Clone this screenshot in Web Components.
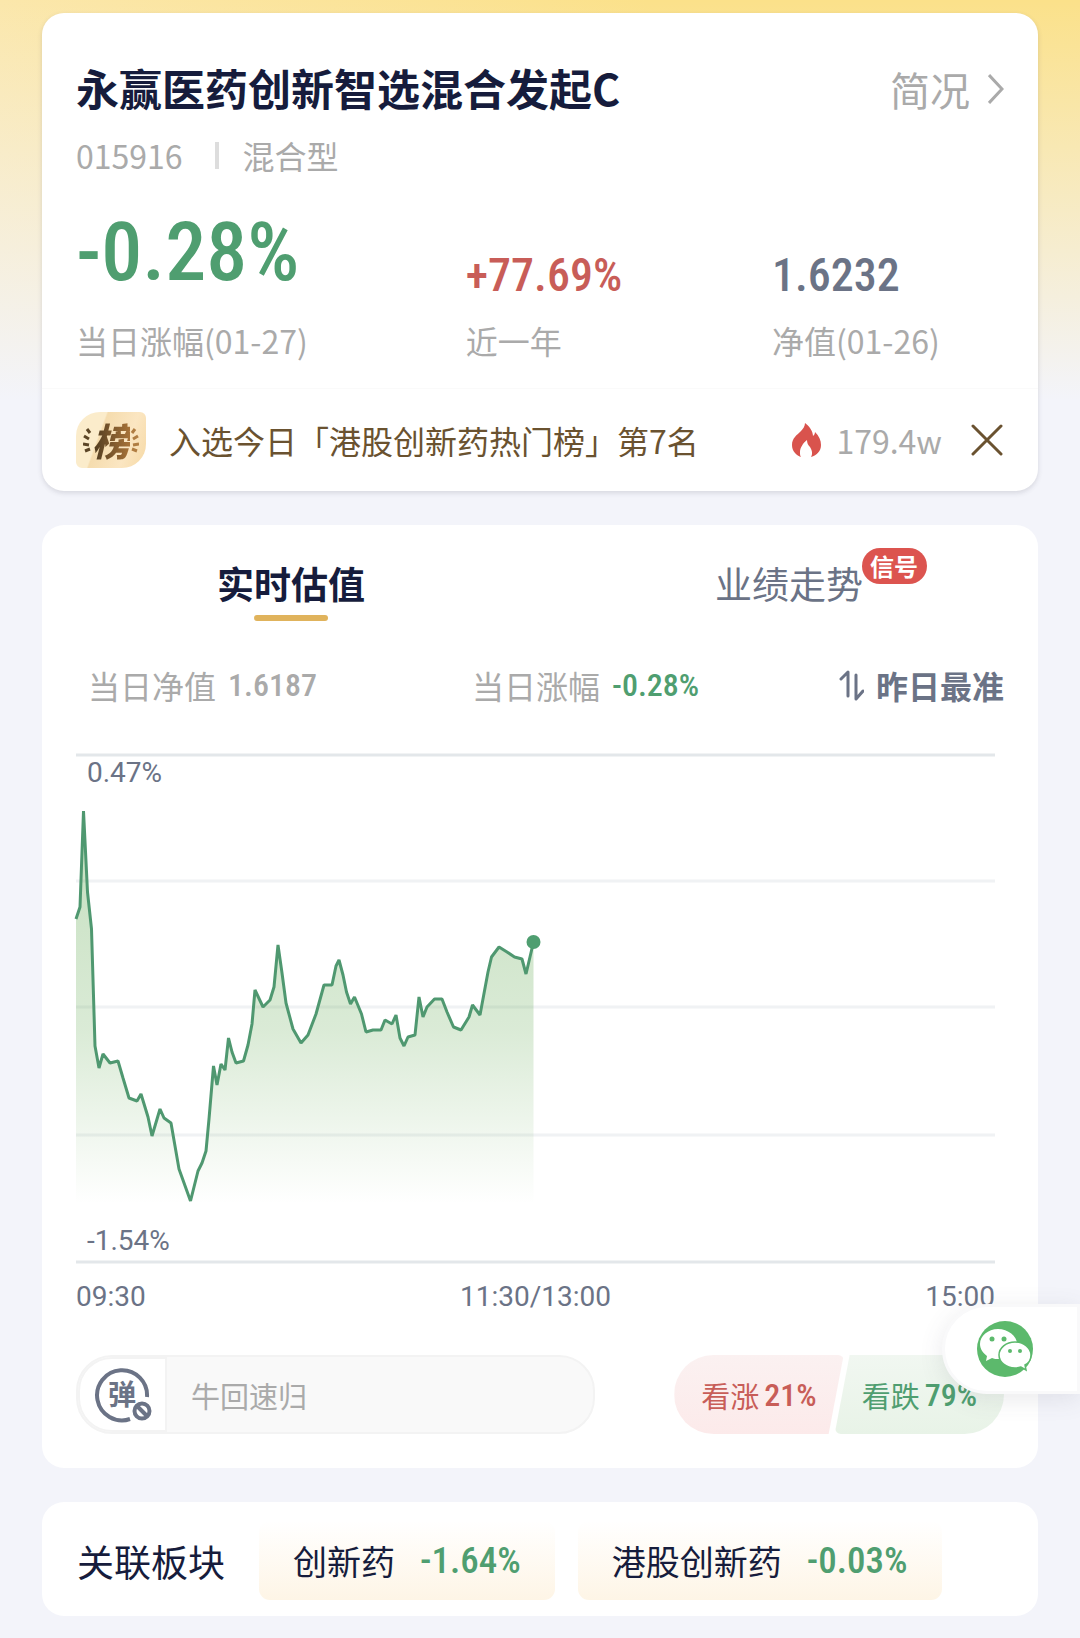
<!DOCTYPE html>
<html lang="zh-CN">
<head>
<meta charset="UTF-8">
<meta name="viewport" content="width=device-width, initial-scale=1.0">
<title>永赢医药创新智选混合发起C</title>
<style>
    :root {
        --ink: #161c3c;
        --slate: #6b7386;
        --muted: #aaaaaa;
        --green: #4f9e70;
        --red: #c85d58;
        --brown: #6a5230;
        --number-font: "Roboto Condensed", "Liberation Sans Narrow", Roboto, sans-serif;
    }
    * { box-sizing: border-box; }
    html { background: #f3f4fa; }
    body {
        margin: 0;
        padding: 13px 42px 21px;
        display: flex;
        flex-direction: column;
        gap: 34px;
        font-family: "Noto Sans CJK SC", sans-serif;
        font-size: 32px;
        line-height: 40px;
        color: var(--ink);
        background:
            linear-gradient(to bottom, rgba(243, 244, 250, 0) 0, #f3f4fa 400px),
            linear-gradient(to right, #fbe7ab, #fbe18a 60%);
    }
</style>
</head>
<body>
    <fund-header code="015916" type="混合型">
        永赢医药创新智选混合发起C
        <fund-metric slot="metrics" tone="green" size="big" value="-0.28%">当日涨幅(01-27)</fund-metric>
        <fund-metric slot="metrics" tone="red" value="+77.69%">近一年</fund-metric>
        <fund-metric slot="metrics" tone="slate" value="1.6232">净值(01-26)</fund-metric>
        <rank-strip slot="strip" heat="179.4w">入选今日「港股创新药热门榜」第7名</rank-strip>
    </fund-header>

    <estimate-panel>
        <intraday-chart high="0.47%" low="-1.54%"></intraday-chart>
        <barrage-box slot="footer" placeholder="牛回速归"></barrage-box>
        <vote-bar slot="footer" up="21%" down="79%"></vote-bar>
    </estimate-panel>

    <related-sectors>
        <sector-chip change="-1.64%">创新药</sector-chip>
        <sector-chip change="-0.03%">港股创新药</sector-chip>
    </related-sectors>

    <wechat-float></wechat-float>

<script>
const baseStyles = `
    * { box-sizing: border-box; }
    button, input {
        font: inherit;
        color: inherit;
        margin: 0;
        padding: 0;
        border: 0;
        background: none;
    }
    button { cursor: pointer; }
    a { color: inherit; text-decoration: none; }
    svg { display: block; flex: none; }
    .num { font-family: var(--number-font); font-weight: 500; }
`;

class BaseElement extends HTMLElement {
    constructor() {
        super();
        this.attachShadow({ mode: 'open' });
    }

    connectedCallback() {
        this.shadowRoot.innerHTML = `<style>${baseStyles}</style>${this.render()}`;
    }
}

// 基金头部
class FundHeader extends BaseElement {
    render() {
        return `
            <style>
                :host {
                    display: block;
                    background: white;
                    border-radius: 22px;
                    box-shadow: 0 2px 5px rgba(60, 60, 80, 0.16);
                }
                .main { padding: 44px 34px 28px; }
                .top {
                    display: flex;
                    justify-content: space-between;
                    align-items: baseline;
                }
                h1 {
                    margin: 0;
                    font-size: 43px;
                    line-height: 60px;
                    font-weight: 700;
                }
                .more {
                    display: flex;
                    align-items: center;
                    gap: 18px;
                    font-size: 40px;
                    color: var(--muted);
                }
                .sub {
                    display: flex;
                    align-items: center;
                    gap: 24px;
                    margin-top: 18px;
                    color: var(--muted);
                }
                .sub i {
                    width: 4px;
                    height: 27px;
                    margin-left: 8px;
                    background: #dddddd;
                }
                .metrics {
                    display: grid;
                    grid-template-columns: 42fr 33fr 25fr;
                    align-items: end;
                    margin-top: 32px;
                }
            </style>
            <div class="main">
                <div class="top">
                    <h1><slot></slot></h1>
                    <a class="more" href="#profile">简况
                        <svg width="16" height="30" viewBox="0 0 16 30" fill="none" stroke="#aaaaaa" stroke-width="3" aria-hidden="true">
                            <path d="M1 1 14 15 1 29"/>
                        </svg>
                    </a>
                </div>
                <div class="sub"><span>${this.getAttribute('code')}</span><i></i><span>${this.getAttribute('type')}</span></div>
                <div class="metrics"><slot name="metrics"></slot></div>
            </div>
            <slot name="strip"></slot>
        `;
    }
}

class FundMetric extends BaseElement {
    render() {
        const big = this.getAttribute('size') === 'big';
        return `
            <style>
                :host { display: block; }
                .num {
                    font-size: ${big ? 82 : 46}px;
                    line-height: ${big ? 90 : 56}px;
                    margin-bottom: ${big ? 23 : 17}px;
                    color: var(--${this.getAttribute('tone')});
                }
                .label { color: var(--muted); }
            </style>
            <div class="num">${this.getAttribute('value')}</div>
            <div class="label"><slot></slot></div>
        `;
    }
}

// 上榜提示条
class RankStrip extends BaseElement {
    render() {
        return `
            <style>
                :host {
                    display: flex;
                    align-items: center;
                    padding: 23px 35px 23px 34px;
                    border-top: 1px solid #fafafa;
                    color: var(--brown);
                }
                .badge {
                    display: flex;
                    align-items: center;
                    justify-content: center;
                    width: 70px;
                    height: 56px;
                    margin-right: 23px;
                    border-radius: 24px 6px 24px 6px;
                    background: linear-gradient(110deg, #fbeccb 34%, #f5dcae 36%, #fbe6c2 70%, #f6d9a5);
                }
                .badge b {
                    font-size: 38px;
                    line-height: 40px;
                    font-weight: 900;
                    font-style: italic;
                    color: transparent;
                    background: linear-gradient(to right, #4d3a20, #a87338);
                    -webkit-background-clip: text;
                    background-clip: text;
                }
                p { margin: 0; flex: 1; }
                .heat {
                    display: flex;
                    align-items: center;
                    gap: 14px;
                    margin-right: 29px;
                    color: var(--muted);
                }
            </style>
            <span class="badge">
                <svg width="9" height="26" viewBox="0 0 9 26" stroke="#5b4526" stroke-width="3" aria-hidden="true"><path d="M4 2l3 4M1 9l5 3M0 17l6 1M2 24l5-2"/></svg>
                <b>榜</b>
                <svg width="9" height="26" viewBox="0 0 9 26" stroke="#b07d42" stroke-width="3" aria-hidden="true"><path d="M5 2L2 6M8 9l-5 3M9 17l-6 1M7 24l-5-2"/></svg>
            </span>
            <p><slot></slot></p>
            <span class="heat">
                <svg width="30" height="34" viewBox="0 0 30 34" aria-hidden="true">
                    <path fill="#d9534d" d="M13 0c4 3 8 8 8 13 1-1 2-2 2-4 4 4 6 8 6 13 0 6-4 10-10 12 2-3 1-7-1-10-2-2-3-4-3-7-4 3-7 8-7 12 0 2 0 4 1 5C4 32 0 28 0 22c0-7 5-10 9-14 2-2 4-5 4-8z"/>
                </svg>
                ${this.getAttribute('heat')}
            </span>
            <button type="button" aria-label="关闭">
                <svg width="32" height="32" viewBox="0 0 32 32" stroke="#6a5230" stroke-width="3" stroke-linecap="round" aria-hidden="true"><path d="M2 2l28 28M30 2L2 30"/></svg>
            </button>
        `;
    }
}

// 实时估值面板
class EstimatePanel extends BaseElement {
    render() {
        return `
            <style>
                :host {
                    display: block;
                    padding: 23px 34px 34px;
                    background: white;
                    border-radius: 22px;
                }
                .tabs {
                    display: grid;
                    grid-template-columns: 1fr 1fr;
                    margin: 0 -34px;
                }
                .tabs button {
                    position: relative;
                    justify-self: center;
                    padding: 10px 0 13px;
                    font-size: 37px;
                    line-height: 50px;
                    color: var(--slate);
                }
                .tabs .active {
                    font-weight: 700;
                    color: var(--ink);
                }
                .tabs .active::after {
                    content: '';
                    position: absolute;
                    left: 25%;
                    right: 25%;
                    bottom: 0;
                    height: 6px;
                    border-radius: 3px;
                    background: #e0b35c;
                }
                .signal {
                    position: absolute;
                    left: 99%;
                    top: 0;
                    width: 65px;
                    border-radius: 18px;
                    font-size: 24px;
                    line-height: 36px;
                    font-weight: 700;
                    color: white;
                    background: #dc544f;
                }
                .stats {
                    display: grid;
                    grid-template-columns: 383fr 366fr auto;
                    align-items: center;
                    padding-left: 12px;
                    margin: 44px 0 49px;
                    color: var(--muted);
                }
                .stats span, .stats button {
                    display: flex;
                    align-items: center;
                    gap: 12px;
                }
                .stats .num { font-size: 32px; }
                .stats .down { color: var(--green); }
                .stats button {
                    font-weight: 700;
                    color: var(--slate);
                }
                .footer {
                    display: flex;
                    gap: 79px;
                    margin-top: 41px;
                }
            </style>
            <div class="tabs" role="tablist">
                <button class="active" type="button" role="tab" aria-selected="true">实时估值</button>
                <button type="button" role="tab" aria-selected="false">业绩走势<span class="signal">信号</span></button>
            </div>
            <div class="stats">
                <span>当日净值 <b class="num">1.6187</b></span>
                <span>当日涨幅 <b class="num down">-0.28%</b></span>
                <button type="button">
                    <svg width="25" height="32" viewBox="0 0 25 32" fill="none" stroke="#6b7386" stroke-width="3" stroke-linejoin="round" stroke-linecap="round" aria-hidden="true"><path d="M2 10l7-7v24M17 6v24l7-8"/></svg>
                    昨日最准
                </button>
            </div>
            <slot></slot>
            <div class="footer"><slot name="footer"></slot></div>
        `;
    }
}

// 分时走势, 坐标为绘图区内的点
const points = [
    [0, 165], [4, 153], [7.5, 57], [11.5, 138], [15.5, 175], [19, 292], [23, 314], [27, 300], [34, 309],
    [42, 307], [47, 324], [53, 344], [61, 347], [65, 340], [72, 363], [76, 382], [84, 355], [88, 364],
    [95, 369], [103, 415], [114.5, 447], [122, 417], [126, 409], [130, 397], [133, 365], [137.5, 312],
    [141, 331], [145, 310], [149, 316], [152.5, 284], [156, 298], [160, 309], [167.5, 307], [172, 291],
    [176, 270], [179, 236], [187, 253], [194, 246], [198, 233], [202, 191], [206, 219], [210, 249],
    [217, 275], [225, 289], [232, 281], [240, 260], [248, 231], [256, 231], [260, 212], [263, 206],
    [267, 221], [270.5, 238], [274.5, 250], [278.5, 243], [285.5, 260], [290, 278], [297, 276], [305, 276],
    [309, 266], [316, 270], [320, 261], [324, 284], [328, 292], [332, 283], [339, 281], [343, 243],
    [347, 263], [351, 253], [358.5, 245], [366, 245], [371, 258], [377.5, 273], [385, 276], [393, 263],
    [396.5, 251], [404, 261], [412, 218], [415.5, 203], [423, 193], [431, 198], [438.5, 203], [446, 205],
    [450, 220], [457.5, 188]
];

class IntradayChart extends BaseElement {
    render() {
        const line = points.map(p => p.join(' ')).join('L');
        const [lastX, lastY] = points[points.length - 1];
        const grid = [127, 253, 381].map(y => `<path stroke="#f0f2f4" d="M0 ${y}H919"/>`).join('');
        return `
            <style>
                :host {
                    display: block;
                    padding-right: 9px;
                    font-family: Roboto, sans-serif;
                    font-size: 28px;
                    line-height: 34px;
                    color: var(--slate);
                }
                .plot { display: grid; }
                .plot > * { grid-area: 1 / 1; }
                svg { width: 100%; height: auto; overflow: visible; }
                .labels {
                    display: flex;
                    flex-direction: column;
                    justify-content: space-between;
                    padding: 2px 11px 6px;
                }
                .times {
                    display: flex;
                    justify-content: space-between;
                    padding-top: 16px;
                }
            </style>
            <div class="plot">
                <svg viewBox="0 0 919 510" fill="none" stroke-width="3" role="img" aria-label="当日估值走势">
                    <defs>
                        <linearGradient id="fade" gradientUnits="userSpaceOnUse" x1="0" y1="100" x2="0" y2="450">
                            <stop offset="0" stop-color="#4f9e3c" stop-opacity="0.31"/>
                            <stop offset="0.5" stop-color="#4f9e3c" stop-opacity="0.21"/>
                            <stop offset="1" stop-color="#4f9e3c" stop-opacity="0"/>
                        </linearGradient>
                    </defs>
                    ${grid}
                    <path stroke="#e3e7ea" d="M0 1H919M0 508H919"/>
                    <path fill="url(#fade)" d="M${line}V450H0z"/>
                    <path stroke="#4f9870" stroke-linejoin="bevel" d="M${line}"/>
                    <circle cx="${lastX}" cy="${lastY}" r="7" fill="#4f9e70"/>
                </svg>
                <div class="labels">
                    <span>${this.getAttribute('high')}</span>
                    <span>${this.getAttribute('low')}</span>
                </div>
            </div>
            <div class="times"><span>09:30</span><span>11:30/13:00</span><span>15:00</span></div>
        `;
    }
}

// 弹幕输入框
class BarrageBox extends BaseElement {
    render() {
        return `
            <style>
                :host {
                    flex: 1;
                    min-width: 0;
                    display: flex;
                    height: 79px;
                    border: 2px solid #f3f3f3;
                    border-radius: 36px;
                    background: #f9f9f9;
                    overflow: hidden;
                }
                button {
                    flex: none;
                    padding: 8px 12px 8px 15px;
                    border: 2px solid #f3f3f3;
                    border-radius: 34px 0 0 34px;
                    background: white;
                }
                input {
                    flex: 1;
                    min-width: 0;
                    padding: 0 24px;
                    font-size: 29px;
                    outline: none;
                }
                input::placeholder { color: var(--muted); opacity: 1; }
            </style>
            <button type="button" aria-label="弹幕开关">
                <svg width="58" height="56" viewBox="0 0 58 56" fill="none" stroke="#6b7386" stroke-width="4" aria-hidden="true">
                    <path d="M52 30A25 25 0 1 0 35 52"/>
                    <text x="13" y="38" font-size="28" font-weight="700" fill="#6b7386" stroke="none">弹</text>
                    <circle cx="47" cy="44" r="7.500"/>
                    <path d="M42 39l10 10"/>
                </svg>
            </button>
            <input type="text" aria-label="发弹幕" placeholder="${this.getAttribute('placeholder')}">
        `;
    }
}

// 看涨看跌
class VoteBar extends BaseElement {
    render() {
        return `
            <style>
                :host {
                    display: flex;
                    font-size: 29px;
                }
                button {
                    display: flex;
                    align-items: center;
                    gap: 5px;
                    height: 79px;
                    padding: 0 27px;
                }
                .num { font-size: 32px; }
                .up {
                    color: var(--red);
                    background: linear-gradient(#fbf1f1, #fceaea);
                    border-radius: 40px 6px 6px 40px;
                    clip-path: polygon(0 0, 100% 0, calc(100% - 15px) 100%, 0 100%);
                }
                .down {
                    margin-left: -9px;
                    color: var(--green);
                    background: linear-gradient(#f1f7f1, #e8f3e7);
                    border-radius: 6px 40px 40px 6px;
                    clip-path: polygon(15px 0, 100% 0, 100% 100%, 0 100%);
                }
            </style>
            <button class="up" type="button">看涨 <b class="num">${this.getAttribute('up')}</b></button>
            <button class="down" type="button">看跌 <b class="num">${this.getAttribute('down')}</b></button>
        `;
    }
}

// 关联板块
class RelatedSectors extends BaseElement {
    render() {
        return `
            <style>
                :host {
                    display: flex;
                    align-items: center;
                    gap: 23px;
                    padding: 19px 35px 16px;
                    background: white;
                    border-radius: 22px;
                }
                h2 {
                    margin: 0 11px 0 0;
                    font-size: 37px;
                    font-weight: 400;
                }
            </style>
            <h2>关联板块</h2>
            <slot></slot>
        `;
    }
}

class SectorChip extends BaseElement {
    render() {
        return `
            <style>
                :host { display: block; }
                a {
                    display: flex;
                    align-items: center;
                    gap: 25px;
                    height: 79px;
                    padding: 0 34px;
                    border-radius: 11px;
                    font-size: 34px;
                    background: linear-gradient(#ffffff, #fef5e6);
                }
                .num {
                    font-size: 37px;
                    color: var(--green);
                }
            </style>
            <a href="#sector"><slot></slot><b class="num">${this.getAttribute('change')}</b></a>
        `;
    }
}

// 右侧悬浮按钮
class WechatFloat extends BaseElement {
    render() {
        return `
            <style>
                :host {
                    position: absolute;
                    right: 0;
                    top: 1304px;
                }
                button {
                    display: block;
                    padding: 13px 43px 13px 31px;
                    border: 3px solid #f9f9fa;
                    border-radius: 45px 0 0 45px;
                    background: white;
                    box-shadow: 0 5px 24px rgba(80, 80, 100, 0.12);
                }
            </style>
            <button type="button" aria-label="微信分享">
                <svg width="58" height="58" viewBox="0 0 58 58" aria-hidden="true">
                    <circle cx="29" cy="29" r="28" fill="#5cb96c"/>
                    <path fill="white" d="M22 9C12 9 4 16 4 24c0 5 3 9 7 12l-1 5 6-3c2 1 4 1 7 1 11 0 18-7 18-15S32 9 22 9z"/>
                    <path fill="white" stroke="#5cb96c" stroke-width="1.500" d="M39 22c-9 0-16 6-16 13s7 13 16 13c2 0 4 0 6-1l5 3-1-5c4-2 6-6 6-10 0-7-7-13-16-13z"/>
                    <g fill="#5cb96c">
                        <circle cx="16" cy="19" r="2.500"/><circle cx="28" cy="19" r="2.500"/>
                        <circle cx="34" cy="31" r="2"/><circle cx="44" cy="31" r="2"/>
                    </g>
                </svg>
            </button>
        `;
    }
}

customElements.define('fund-header', FundHeader);
customElements.define('fund-metric', FundMetric);
customElements.define('rank-strip', RankStrip);
customElements.define('estimate-panel', EstimatePanel);
customElements.define('intraday-chart', IntradayChart);
customElements.define('barrage-box', BarrageBox);
customElements.define('vote-bar', VoteBar);
customElements.define('related-sectors', RelatedSectors);
customElements.define('sector-chip', SectorChip);
customElements.define('wechat-float', WechatFloat);
</script>
</body>
</html>
